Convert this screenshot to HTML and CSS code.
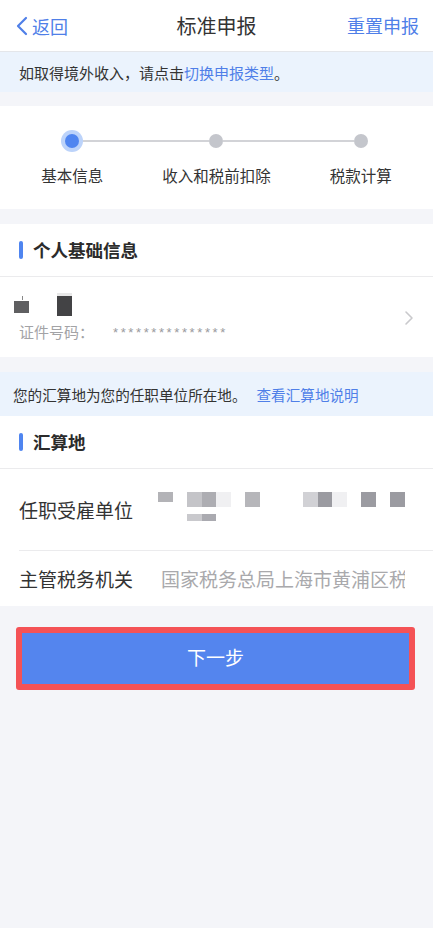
FILE: index.html
```html
<!DOCTYPE html>
<html lang="zh-CN">
<head>
<meta charset="utf-8">
<title>标准申报</title>
<link rel="stylesheet" href="styles.css">
</head>
<body>
<div class="page">
  <header class="nav">
    <div class="nav-left">
      <svg class="back-icon" width="12" height="20" viewBox="0 0 12 20"><path d="M10 2 L2 10 L10 18" fill="none" stroke="#4f7fe8" stroke-width="2.2" stroke-linecap="round" stroke-linejoin="round"/></svg>
      <span class="nav-link">返回</span>
    </div>
    <div class="nav-title">标准申报</div>
    <div class="nav-right"><span class="nav-link">重置申报</span></div>
  </header>

  <div class="notice notice-top">如取得境外收入，请点击<span class="link">切换申报类型</span>。</div>

  <section class="stepper">
    <div class="step-track">
      <span class="dot-active"><span class="dot-inner"></span></span>
      <span class="track-line line-a"></span>
      <span class="dot"></span>
      <span class="track-line line-b"></span>
      <span class="dot"></span>
    </div>
    <div class="step-labels">
      <span>基本信息</span>
      <span>收入和税前扣除</span>
      <span>税款计算</span>
    </div>
  </section>

  <section class="card card-personal">
    <div class="card-head"><span class="bar"></span><span class="card-title">个人基础信息</span></div>
    <div class="person-row">
      <div class="person-info">
        <div class="name-redact">
          <span class="nb nb1"><span class="tick"></span></span>
          <span class="nb nb2"></span>
        </div>
        <div class="id-line"><span class="id-label">证件号码：</span><span class="id-value">***************</span></div>
      </div>
      <svg class="chev" width="10" height="16" viewBox="0 0 10 16"><path d="M2 2 L8 8 L2 14" fill="none" stroke="#c9c9cc" stroke-width="1.6" stroke-linecap="round" stroke-linejoin="round"/></svg>
    </div>
  </section>

  <div class="notice notice-mid">您的汇算地为您的任职单位所在地。<span class="link link-gap">查看汇算地说明</span></div>

  <section class="card card-place">
    <div class="card-head"><span class="bar"></span><span class="card-title">汇算地</span></div>
    <div class="form-row row-employer">
      <div class="row-label">任职受雇单位</div>
      <div class="row-value redact">
        <div class="rgrid">
          <span class="rb short c-a"></span><span class="rb"></span><span class="rb c-b"></span><span class="rb c-c"></span><span class="rb c-d"></span><span class="rb"></span><span class="rb c-e"></span><span class="rb"></span><span class="rb"></span><span class="rb"></span><span class="rb c-f"></span><span class="rb c-g"></span><span class="rb c-d"></span><span class="rb"></span><span class="rb c-g"></span><span class="rb"></span><span class="rb c-g"></span>
        </div>
        <div class="rgrid rgrid-2">
          <span class="rb"></span><span class="rb"></span><span class="rb c-h"></span><span class="rb c-i"></span>
        </div>
      </div>
    </div>
    <div class="form-row row-office">
      <div class="row-label">主管税务机关</div>
      <div class="row-value office-value">国家税务总局上海市黄浦区税务局</div>
    </div>
  </section>

  <div class="btn-wrap">
    <button class="btn-next">下一步</button>
  </div>
</div>
</body>
</html>
```

FILE: styles.css
```css
* { box-sizing: border-box; margin: 0; padding: 0; }
html, body { background: #f4f5f9; }
body {
  font-family: "Noto Sans CJK SC", "Noto Sans", sans-serif;
  color: #333;
  width: 433px;
  min-height: 928px;
}
.page { display: flex; flex-direction: column; }

.nav {
  height: 52px;
  background: #fff;
  border-bottom: 1px solid #e4e6ea;
  display: grid;
  grid-template-columns: 1fr auto 1fr;
  align-items: center;
}
.nav-left { display: flex; align-items: center; padding-left: 16px; gap: 4px; }
.back-icon { display: block; }
.nav-link { color: #4f7fe8; font-size: 18px; line-height: 24px; }
.nav-title { font-size: 20px; color: #333; line-height: 26px; }
.nav-right { text-align: right; padding-right: 14px; }

.notice {
  background: #ebf3fd;
  display: flex;
  align-items: center;
  color: #333;
}
.notice-top { height: 40px; padding-left: 19px; font-size: 15px; }
.notice-mid { height: 44px; padding-left: 13px; font-size: 14.6px; margin-top: 15px; }
.link { color: #4f7fe8; }
.link-gap { margin-left: 10px; }

.stepper {
  margin-top: 14px;
  background: #fff;
  height: 103px;
  padding-top: 24px;
}
.step-track { display: flex; align-items: center; padding-left: 61px; height: 22px; }
.dot-active {
  width: 22px; height: 22px; border-radius: 50%;
  background: #bcd3fa;
  display: flex; align-items: center; justify-content: center;
  flex: none;
}
.dot-inner { width: 14px; height: 14px; border-radius: 50%; background: #4f85f0; }
.dot { width: 14px; height: 14px; border-radius: 50%; background: #c4c6cc; flex: none; }
.track-line { height: 1.5px; background: #d2d3d7; flex: none; }
.line-a { width: 126px; }
.line-b { width: 131px; }
.step-labels {
  display: grid;
  grid-template-columns: repeat(3, 1fr);
  text-align: center;
  margin-top: 12px;
  font-size: 15.5px;
  line-height: 22px;
  color: #333;
}

.card { background: #fff; }
.card-personal { margin-top: 15px; }
.card-head {
  height: 53px;
  display: flex;
  align-items: center;
  padding-left: 19px;
  border-bottom: 1px solid #ebebed;
}
.bar { width: 4px; height: 18px; border-radius: 2px; background: #4f85f0; margin-right: 10px; }
.card-title { font-size: 17.5px; font-weight: 700; color: #2b2b2b; line-height: 24px; }

.person-row {
  height: 80px;
  display: flex;
  align-items: center;
  padding-right: 19px;
}
.person-info { flex: 1; padding-left: 14px; }
.name-redact { height: 23px; display: flex; align-items: flex-start; }
.nb { display: block; width: 15px; position: relative; }
.nb1 { height: 12px; margin-top: 8px; background: #5f5f61; }
.nb2 { height: 23px; margin-left: 28px; background: linear-gradient(#e8e8e8 0, #e8e8e8 3px, #434345 3px); }
.tick { position: absolute; left: 8px; top: -5px; width: 1px; height: 4px; background: #888; }
.id-line { display: flex; align-items: center; height: 20px; margin-top: 5px; padding-left: 5px; }
.id-label { font-size: 15px; color: #a3a3a6; width: 94px; }
.id-value {
  font-family: "Liberation Sans", sans-serif;
  font-size: 13px;
  letter-spacing: 2.6px;
  color: #9a9a9e;
  padding-top: 3px;
}
.chev { display: block; margin-top: 2px; }

.form-row { display: flex; align-items: center; margin-left: 19px; }
.row-employer { height: 82px; border-bottom: 1px solid #ebebed; }
.row-office { height: 55px; }
.row-label { width: 139px; flex: none; font-size: 19px; color: #333; line-height: 26px; }
.row-value { flex: 1; overflow: hidden; }
.redact { margin-bottom: 6px; }
.rgrid { display: grid; grid-template-columns: repeat(17, 14.5px); height: 15px; }
.rgrid-2 { height: 7px; margin-top: 7px; }
.rb { display: block; }
.rb.short { height: 10px; }
.c-a { background: #b3b3b7; }
.c-b { background: #c4c4c8; }
.c-c { background: #adadb2; }
.c-d { background: #f0f0f2; }
.c-e { background: #b6b6ba; }
.c-f { background: #d1d1d5; }
.c-g { background: #9b9ba1; }
.c-h { background: #c9c9cd; }
.c-i { background: #aaaab0; }
.office-value {
  font-size: 19px;
  color: #a9a9ac;
  white-space: nowrap;
  padding-left: 3px;
  margin-right: 28px;
  line-height: 26px;
}

.btn-wrap { padding: 21px 18px 0 16px; }
.btn-next {
  display: block;
  width: 399px;
  height: 63px;
  border: 6px solid #f45256;
  border-radius: 3px;
  background: #5485ee;
  color: #fff;
  font-family: "Noto Sans CJK SC", sans-serif;
  font-size: 19px;
  padding-bottom: 5px;
}
```
